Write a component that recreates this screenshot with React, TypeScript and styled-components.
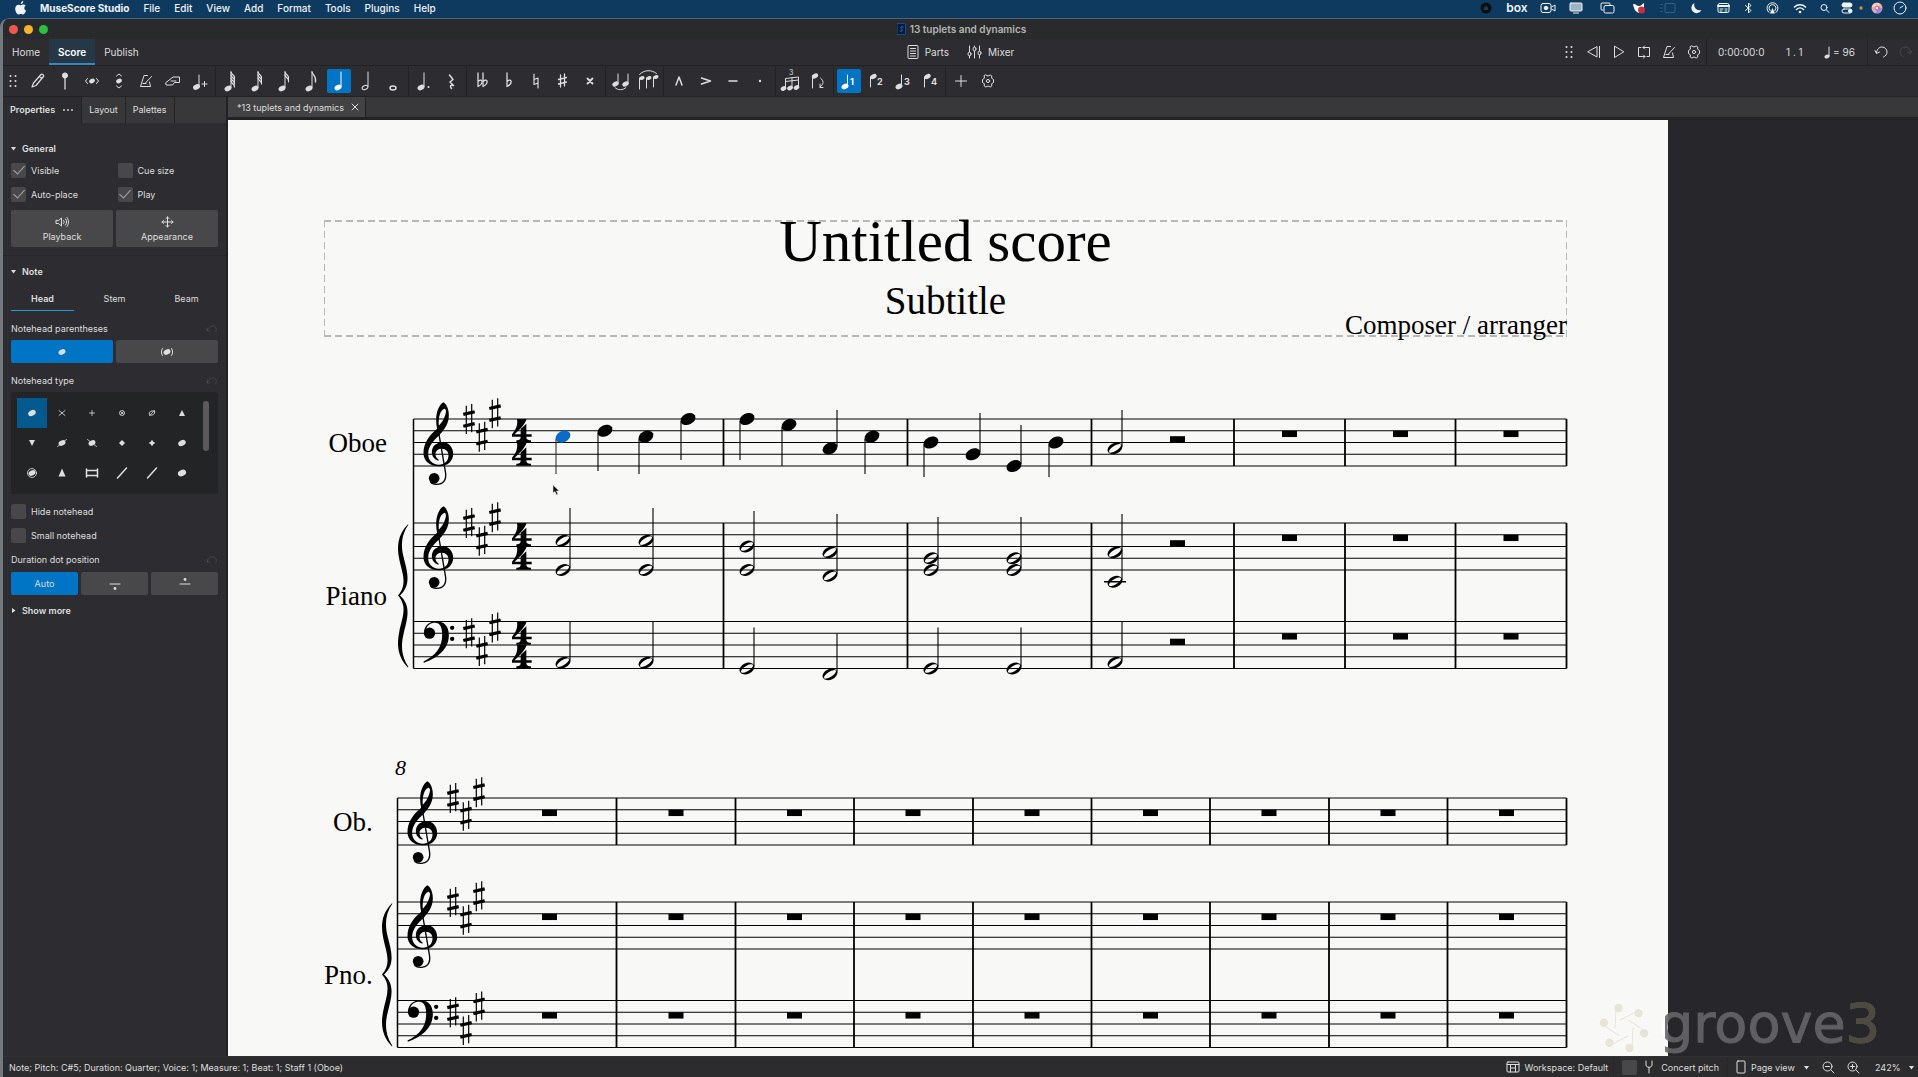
import React from "react";
import styled, { createGlobalStyle, css } from "styled-components";

const c = {
  menu: "#0e3a5f",
  title: "#292a2b",
  panel: "#2d2d31",
  tab: "#38383a",
  line: "#222225",
  button: "#48484a",
  well: "#232426",
  accent: "#0075c6",
  accentDeep: "#04598f",
  text: "#dededf",
  paper: "#f8f8f7",
  canvas: "#27262b",
};

const Global = createGlobalStyle`
  * { box-sizing: border-box; }
  html, body { margin: 0; height: 100%; }
  #root { height: 100%; }
  body { background: ${c.menu}; font-family: Inter, "Liberation Sans", sans-serif; color: ${c.text}; font-size: 9px; overflow: hidden; }
  button, input, select { font: inherit; color: inherit; border: 0; margin: 0; padding: 0; background: none; }
  svg { display: block; flex: none; }
`;

const Desktop = styled.div`
  display: flex;
  flex-direction: column;
  height: 100vh;
`;

/* ---------- system menu bar ---------- */
const MenuBar = styled.header`
  display: flex;
  align-items: center;
  height: 18px;
  flex: none;
  padding: 0 8px 2px 14px;
  font-size: 10px;
  color: #eef3f7;
`;
const Menus = styled.nav`
  display: flex;
  gap: 14px;
  margin-left: 12px;
  flex: 1;
`;
const MenuItem = styled.button<{ $strong?: boolean }>`
  line-height: 14px;
  font-weight: ${(p) => (p.$strong ? 700 : 500)};
`;
const Tray = styled.div`
  display: flex;
  align-items: center;
`;
const TraySlot = styled.span<{ $w: number }>`
  display: flex;
  justify-content: center;
  width: ${(p) => p.$w}px;
`;
const BoxWord = styled.span`
  font-weight: 600;
  font-size: 12px;
  line-height: 14px;
`;

/* ---------- application window ---------- */
const Window = styled.div`
  flex: 1;
  min-height: 0;
  display: flex;
  flex-direction: column;
  background: ${c.panel};
  border-left: 3px solid #73797e;
  border-top: 1px solid #4b6478;
  border-top-left-radius: 9px;
  overflow: hidden;
`;
const TitleBar = styled.div`
  display: grid;
  grid-template-columns: 1fr auto 1fr;
  align-items: center;
  height: 20px;
  flex: none;
  background: ${c.title};
  padding-left: 6px;
`;
const Lights = styled.div`
  display: flex;
  gap: 6px;
`;
const Light = styled.button<{ $color: string }>`
  width: 9px;
  height: 9px;
  border-radius: 50%;
  background: ${(p) => p.$color};
`;
const DocTitle = styled.div`
  display: flex;
  align-items: center;
  gap: 4px;
  padding-right: 4px;
  font-size: 10px;
  font-weight: 600;
  color: #b5b5b6;
`;

const NavRow = styled.div`
  display: grid;
  grid-template-columns: 1fr auto 1fr;
  align-items: stretch;
  height: 27px;
  flex: none;
  border-bottom: 1px solid ${c.line};
`;
const NavTabs = styled.nav`
  display: flex;
`;
const NavTab = styled.button<{ $on?: boolean }>`
  padding: 0 9px;
  font-size: 10px;
  font-weight: ${(p) => (p.$on ? 600 : 400)};
  ${(p) =>
    p.$on &&
    css`
      background: #263846;
      box-shadow: inset 0 -2px 0 #3688c0;
      color: #fff;
    `}
`;
const NavCenter = styled.div`
  display: flex;
  align-items: center;
  gap: 18px;
`;
const TextButton = styled.button`
  display: flex;
  align-items: center;
  gap: 6px;
  font-size: 10px;
`;
const Transport = styled.div`
  display: flex;
  align-items: center;
  justify-content: flex-end;
`;
const TransportButton = styled.button<{ $dim?: boolean }>`
  width: 25px;
  height: 24px;
  display: flex;
  align-items: center;
  justify-content: center;
  opacity: ${(p) => (p.$dim ? 0.15 : 1)};
`;
const Readout = styled.output<{ $w: number }>`
  display: flex;
  align-items: center;
  gap: 3px;
  width: ${(p) => p.$w}px;
  padding-left: 11px;
  font-size: 10px;
`;

const Tools = styled.div`
  display: flex;
  align-items: center;
  gap: 3px;
  height: 31px;
  flex: none;
  border-bottom: 1px solid ${c.line};
`;
const Tool = styled.button<{ $on?: boolean; $narrow?: boolean }>`
  display: flex;
  align-items: center;
  justify-content: center;
  width: ${(p) => (p.$narrow ? 20 : 24)}px;
  height: 24px;
  border-radius: 2px;
  background: ${(p) => (p.$on ? c.accent : "transparent")};
  color: ${(p) => (p.$on ? "#fff" : c.text)};
`;
const Rule = styled.span`
  width: 1px;
  align-self: stretch;
  background: ${c.line};
`;

const Work = styled.div`
  flex: 1;
  min-height: 0;
  display: grid;
  grid-template-columns: 225px 1fr;
`;

/* ---------- side panel ---------- */
const Side = styled.aside`
  border-right: 2px solid ${c.line};
  min-height: 0;
  overflow: hidden;
`;
const SideTabs = styled.div`
  display: flex;
  height: 26px;
  margin-bottom: 15px;
  background: ${c.tab};
`;
const SideTab = styled.button<{ $on?: boolean }>`
  display: flex;
  align-items: center;
  gap: 7px;
  padding: 0 7px 1px;
  border-right: 1px solid ${c.line};
  font-weight: ${(p) => (p.$on ? 600 : 400)};
  background: ${(p) => (p.$on ? c.panel : "transparent")};
`;
const Group = styled.section`
  padding: 0 8px;
`;
const GroupHead = styled.button`
  display: flex;
  align-items: center;
  gap: 6px;
  height: 20px;
  font-weight: 600;
`;
const Divider = styled.hr`
  border: 0;
  border-top: 1px solid #27272b;
  margin: 8px 0 5px;
`;
const Checks = styled.div<{ $cols?: number }>`
  display: grid;
  grid-template-columns: repeat(${(p) => p.$cols || 1}, 1fr);
  column-gap: 6px;
  margin-bottom: ${(p) => (p.$cols ? 4 : 0)}px;
`;
const Check = styled.label`
  display: flex;
  align-items: center;
  gap: 5px;
  height: 24px;
`;
const CheckInput = styled.input`
  appearance: none;
  width: 15px;
  height: 15px;
  border-radius: 2px;
  background: ${c.button};
  display: flex;
  justify-content: center;
  &:checked::after {
    content: "";
    width: 5px;
    height: 10px;
    border: solid #a8a8aa;
    border-width: 0 1px 1px 0;
    transform: rotate(42deg);
  }
`;
const Buttons = styled.div<{ $cols: number }>`
  display: grid;
  grid-template-columns: repeat(${(p) => p.$cols}, 1fr);
  gap: 3px;
`;
const PanelButton = styled.button<{ $on?: boolean; $tall?: boolean }>`
  display: flex;
  flex-direction: column;
  align-items: center;
  justify-content: center;
  gap: 3px;
  height: ${(p) => (p.$tall ? 37 : 23)}px;
  border-radius: 2px;
  background: ${(p) => (p.$on ? c.accent : c.button)};
`;
const InnerTabs = styled.div`
  display: grid;
  grid-template-columns: repeat(3, 1fr);
  gap: 9px;
  height: 30px;
`;
const InnerTab = styled.button<{ $on?: boolean }>`
  padding-top: 6px;
  font-weight: ${(p) => (p.$on ? 600 : 400)};
  border-bottom: 1px solid ${(p) => (p.$on ? "#2a94dc" : "transparent")};
`;
const FieldHead = styled.div<{ $tight?: boolean }>`
  display: flex;
  align-items: center;
  justify-content: space-between;
  height: ${(p) => (p.$tight ? 25 : 29)}px;
  padding-top: ${(p) => (p.$tight ? 0 : 6)}px;
`;
const Heads = styled.div`
  display: flex;
  justify-content: space-between;
  margin-bottom: 5px;
  padding: 6px 9px 5px 6px;
  height: 102px;
  background: ${c.well};
  border-radius: 2px;
`;
const HeadGrid = styled.div`
  display: grid;
  grid-template-columns: repeat(6, 30px);
  grid-auto-rows: 30px;
`;
const HeadCell = styled.button<{ $on?: boolean }>`
  display: flex;
  align-items: center;
  justify-content: center;
  background: ${(p) => (p.$on ? c.accentDeep : "transparent")};
`;
const Thumb = styled.span`
  width: 6px;
  height: 50px;
  margin-top: 3px;
  border-radius: 3px;
  background: #5b5b5d;
`;
const More = styled.div`
  margin-top: 5px;
`;

/* ---------- document area ---------- */
const Doc = styled.main`
  display: flex;
  flex-direction: column;
  min-width: 0;
  min-height: 0;
`;
const DocTabs = styled.div`
  display: flex;
  height: 20px;
  flex: none;
  background: ${c.tab};
`;
const DocTab = styled.button`
  display: flex;
  align-items: center;
  gap: 7px;
  padding: 0 6px 0 9px;
  background: #424244;
  border-right: 1px solid ${c.line};
`;
const Canvas = styled.div`
  position: relative;
  flex: 1;
  min-height: 0;
  border-top: 3px solid ${c.line};
  background: ${c.canvas};
  overflow: hidden;
`;
const Paper = styled.article`
  width: 1440px;
  padding: 100px 101px 80px 96px;
  background: ${c.paper};
  color: #000;
  font-family: "Liberation Serif", serif;
`;
const dash = "#b9b9b9 0 7px, transparent 7px 11px";
const Frame = styled.header`
  display: flex;
  flex-direction: column;
  align-items: center;
  height: 117px;
  background:
    repeating-linear-gradient(90deg, ${dash}) top / 100% 2px no-repeat,
    repeating-linear-gradient(90deg, ${dash}) bottom / 100% 2px no-repeat,
    repeating-linear-gradient(0deg, ${dash}) left / 1px 100% no-repeat,
    repeating-linear-gradient(0deg, ${dash}) right / 1px 100% no-repeat;
`;
const ScoreTitle = styled.h1`
  margin: 0;
  font-weight: 400;
  font-size: 59px;
  line-height: 42px;
`;
const Subtitle = styled.p`
  margin: 20px 0 0;
  font-size: 39px;
  line-height: 38px;
`;
const Composer = styled.p`
  margin: 0;
  align-self: flex-end;
  font-size: 27px;
  line-height: 10px;
`;
const SystemBox = styled.section<{ $labels: number }>`
  display: grid;
  grid-template-columns: ${(p) => p.$labels}px 1fr;
  column-gap: 5px;
`;
const FirstSystem = styled.div`
  margin-top: 82px;
`;
const Names = styled.div`
  display: grid;
  grid-template-rows: 47px 145px;
  row-gap: 57px;
  align-items: center;
  justify-items: end;
  font-size: 27px;
  line-height: 30px;
`;
const MeasureNumber = styled.div`
  margin: 87px 0 18px;
  padding-left: 71px;
  font-size: 22px;
  line-height: 24px;
  font-style: italic;
`;
const Notation = styled.svg`
  overflow: visible;
`;
const Pointer = styled.div`
  position: absolute;
  left: 324px;
  top: 364px;
`;
const Watermark = styled.div`
  position: absolute;
  right: 38px;
  bottom: 0;
  display: flex;
  align-items: center;
  gap: 10px;
  height: 56px;
  color: #6a696e;
  opacity: 0.9;
  font: 54px/50px "DejaVu Sans", sans-serif;
  -webkit-text-stroke: 1px currentColor;
`;
const WaterWord = styled.span`
  padding-bottom: 8px;
  background: linear-gradient(90deg, #fff 6px, #66656a 6px);
  background-clip: text;
  color: transparent;
`;
const WaterDigit = styled.span`
  color: #525043;
`;

/* ---------- status bar ---------- */
const Status = styled.footer`
  display: flex;
  align-items: center;
  height: 21px;
  flex: none;
  padding: 0 4px 0 6px;
  background: #2c2c2e;
  border-top: 1px solid #333335;
  white-space: nowrap;
`;
const StatusText = styled.span`
  flex: 1;
`;
const StatusItem = styled.div`
  display: flex;
  align-items: center;
  gap: 5px;
  height: 100%;
  padding: 0 8px;
  border-left: 1px solid #262628;
`;
const StatusButton = styled.button`
  display: flex;
  align-items: center;
  gap: 5px;
  padding: 0 5px;
`;
const ZoomButtons = styled.div`
  display: flex;
  gap: 2px;
  margin-right: 10px;
`;
const StatusLabel = styled.label`
  display: flex;
  align-items: center;
  gap: 8px;
`;
const Drop = styled.select<{ $w: number }>`
  appearance: none;
  width: ${(p) => p.$w}px;
`;

/* ---------- small drawings ---------- */
type IconProps = { w?: number; h?: number; children: React.ReactNode };
const Icon = ({ w = 24, h = 24, children }: IconProps) => (
  <svg
    width={w}
    height={h}
    viewBox={`0 0 ${w} ${h}`}
    fill="none"
    stroke="currentColor"
    strokeWidth={1}
    strokeLinecap="round"
    strokeLinejoin="round"
    aria-hidden="true"
  >
    {children}
  </svg>
);
const Solid = ({ d }: { d: string }) => <path d={d} fill="currentColor" stroke="none" />;
const Blob = ({ x, y, s = 1 }: { x: number; y: number; s?: number }) => (
  <ellipse cx={x} cy={y} rx={3.3 * s} ry={2.3 * s} transform={`rotate(-25 ${x} ${y})`} fill="currentColor" stroke="none" />
);
const Grip = () => (
  <Icon w={8} h={14}>
    {[2, 7, 12].map((y) => (
      <g key={y} fill="currentColor" stroke="none">
        <circle cx="1.5" cy={y} r="1" />
        <circle cx="6.5" cy={y} r="1" />
      </g>
    ))}
  </Icon>
);
const Metronome = () => (
  <Icon w={14} h={14}>
    <path d="M8.5 1.5H5L1.5 12.5h10L10.500 8M4 9.500h3M6 9.500 12.500 2.500" />
  </Icon>
);
const Gear = () => (
  <Icon w={14} h={14}>
    <path d="M4.800 1 7 2l2.200-1 1.600 1-.2 2.200 1.900 1.300v3l-1.900 1.300.2 2.200-1.600 1L7 12l-2.200 1-1.600-1 .2-2.200-1.900-1.300v-3l1.900-1.300L3.200 2z" />
    <circle cx="7" cy="7" r="1.600" />
  </Icon>
);
const Flagged = ({ flags }: { flags: number }) => (
  <Icon>
    <Blob x={9} y={19.500} s={1.100} />
    <path d="M12 18.500V3" />
    {Array.from({ length: flags }, (_, i) => (
      <path key={i} d={`M12 ${3 + i * 3}c.5 3 4.500 3.500 3.500 ${flags === 1 ? 10 : 6}`} strokeWidth={1.300} />
    ))}
    {flags > 1 && <path d={`M15.500 9V${11 + flags}`} />}
  </Icon>
);
const Reset = () => (
  <Icon w={12} h={10}>
    <g opacity="0.12">
      <path d="M1 4v3h3M1.500 6.500C2 3 5 1.500 7.500 2c3 .7 3.500 4 2 6" />
    </g>
  </Icon>
);
const Triangle = ({ right }: { right?: boolean }) => (
  <Icon w={5} h={5}>
    <Solid d={right ? "M1 0 4.500 2.500 1 5z" : "M0 1h5L2.500 4.500z"} />
  </Icon>
);
const Voice = ({ n }: { n: number }) => (
  <Icon>
    {n % 2 ? (
      <>
        <Blob x={8} y={17.500} s={1.100} />
        <path d="M10.500 16.500V6" />
      </>
    ) : (
      <>
        <Blob x={9.500} y={7.500} />
        <path d="M6.500 8v10" />
      </>
    )}
    <text x="13" y="15.500" fontSize="9" fontWeight="700" fill="currentColor" stroke="none">
      {n}
    </text>
  </Icon>
);
const sharp = "M9.500 6v12M13.500 5v12M7.500 10.500l8-2M7.500 15l8-2";
const flat = (x: number) => `M${x} 4v13.500c3-1.500 4.500-3.500 4-5.500-.6-1.500-2.500-1-4 .5`;

const tools: { name: string; on?: boolean; art: React.ReactNode }[][] = [
  [
    { name: "Note input", art: <Icon><path d="M6 18l1.500-4L15 5.500c1-1 3.500.8 2.500 2L10 16.500zM13.500 7.500l2.500 2" strokeWidth="1.200" /></Icon> },
    { name: "Input by duration", art: <Icon><circle cx="12" cy="6.500" r="2.600" fill="currentColor" /><path d="M12 8v12" strokeWidth="1.300" /></Icon> },
    { name: "Rhythm only", art: <Icon><Blob x={12} y={12} s={0.9} /><path d="M7.500 9.500 5.500 12l2 2.500M16.500 9.500l2 2.500-2 2.500" /></Icon> },
    { name: "Repitch", art: <Icon><Blob x={12} y={12} s={0.9} /><path d="M9.500 7 12 5l2.500 2M9.500 17l2.500 2 2.500-2" /></Icon> },
    { name: "Metronome input", art: <Metronome /> },
    { name: "Foot pedal", art: <Icon><path d="M5 13.500 12 8h6.500v5.500h-5l-2 2.500H5.500zM10 12h5" /></Icon> },
    { name: "Insert", art: <Icon><Blob x={8.500} y={18} s={1.100} /><path d="M11 17V6M14 15h5M16.500 12.500v5" /></Icon> },
  ],
  [
    { name: "64th note", art: <Flagged flags={4} /> },
    { name: "32nd note", art: <Flagged flags={3} /> },
    { name: "16th note", art: <Flagged flags={2} /> },
    { name: "Eighth note", art: <Flagged flags={1} /> },
    { name: "Quarter note", on: true, art: <Icon><Blob x={11} y={18.500} s={1.100} /><path d="M14 17.500V3" /></Icon> },
    { name: "Half note", art: <Icon><ellipse cx="11" cy="18.500" rx="3" ry="2" transform="rotate(-25 11 18.500)" /><path d="M14 17.500V3" /></Icon> },
    { name: "Whole note", art: <Icon><ellipse cx="12" cy="19" rx="3" ry="2" strokeWidth="1.400" /></Icon> },
  ],
  [
    { name: "Augmentation dot", art: <Icon><Blob x={9} y={18.500} s={1.100} /><path d="M12 17.500V4" /><circle cx="16.500" cy="18" r="1" fill="currentColor" stroke="none" /></Icon> },
    { name: "Rest", art: <Icon><path d="M10.500 6 14 10.500 11 13l3.500 3.500C11.500 15.500 10.500 17 12.500 19.500" strokeWidth="1.500" /></Icon> },
  ],
  [
    { name: "Double flat", art: <Icon><path d={flat(8)} strokeWidth="1.300" /><path d={flat(13)} strokeWidth="1.300" /></Icon> },
    { name: "Flat", art: <Icon><path d={flat(10)} strokeWidth="1.300" /></Icon> },
    { name: "Natural", art: <Icon><path d="M10 5v10.500l4-1.500M14 19V9l-4 1.500" strokeWidth="1.200" /></Icon> },
    { name: "Sharp", art: <Icon><path d={sharp} strokeWidth="1.300" /></Icon> },
    { name: "Double sharp", art: <Icon><path d="M9.500 9.500l5 5M14.500 9.500l-5 5" strokeWidth="1.800" /></Icon> },
  ],
  [
    { name: "Tie", art: <Icon><Blob x={6.500} y={15} /><Blob x={16.500} y={15} /><path d="M9 14.500V5M19 14.500V5M6 18.500c2.500 3 8 3 11 0" /></Icon> },
    { name: "Slur", art: <Icon><Blob x={6} y={9} s={0.8} /><Blob x={13} y={9} s={0.8} /><Blob x={20} y={8} s={0.8} /><path d="M3.500 9v11M10.500 9v10M17.500 8v10M3.500 5.500c5-5 12-5 17-1" /></Icon> },
  ],
  [
    { name: "Marcato", art: <Icon><path d="M9 16l3-8 3 8" strokeWidth="1.500" /></Icon> },
    { name: "Accent", art: <Icon><path d="M7.500 9l9 3-9 3" strokeWidth="1.500" /></Icon> },
    { name: "Tenuto", art: <Icon><path d="M8 12h8" strokeWidth="1.500" /></Icon> },
    { name: "Staccato", art: <Icon><circle cx="12" cy="12" r="1.200" fill="currentColor" stroke="none" /></Icon> },
  ],
  [
    { name: "Tuplet", art: <Icon><Blob x={4.500} y={19.500} s={0.9} /><Blob x={11} y={19} s={0.9} /><Blob x={17.500} y={18.500} s={0.9} /><path d="M6.500 19V9.500l13-1.500v10M13 18.500V9M6.500 12.500l13-1.500" /><text x="10" y="6" fontSize="7" fill="currentColor" stroke="none">3</text></Icon> },
    { name: "Flip direction", art: <Icon><Blob x={9} y={7} /><path d="M6.500 7v12M14.500 9c3.500 3 3.500 6-.5 9M14 15v3.500H17" /></Icon> },
  ],
  [
    { name: "Voice 1", on: true, art: <Voice n={1} /> },
    { name: "Voice 2", art: <Voice n={2} /> },
    { name: "Voice 3", art: <Voice n={3} /> },
    { name: "Voice 4", art: <Voice n={4} /> },
  ],
  [
    { name: "Add", art: <Icon><path d="M6.500 12h11M12 6.500v11" /></Icon> },
    { name: "Customize toolbar", art: <Gear /> },
  ],
];

const tray: { w: number; art: React.ReactNode }[] = [
  { w: 31, art: <Icon w={12} h={12}><circle cx="6" cy="6" r="5.500" fill="#0b1017" stroke="none" /><path d="M3.500 8h5L8 7c0-4-4-4-4 0z" fill="#26384a" stroke="none" /></Icon> },
  { w: 32, art: <BoxWord>box</BoxWord> },
  { w: 30, art: <Icon w={16} h={12}><rect x="1" y="1.500" width="10" height="9" rx="2" /><circle cx="6" cy="6" r="1.800" fill="currentColor" /><path d="M11.500 5 15 3v6l-3.500-2" /></Icon> },
  { w: 26, art: <Icon w={14} h={12}><rect x="1" y="1" width="12" height="8" rx="1" fill="#9fb2c3" /><path d="M4.500 11h5" /></Icon> },
  { w: 36, art: <Icon w={15} h={12}><path d="M3 8H2a1 1 0 0 1-1-1V2a1 1 0 0 1 1-1h7a1 1 0 0 1 1 1v1" /><rect x="4" y="3.500" width="10" height="7.500" rx="1.500" /></Icon> },
  { w: 28, art: <Icon w={15} h={12}><path d="M1 2c3 0 4 2 6 2s3-2 5-3v6l-5 4C4 10 2 8 1 2z" fill="#fff" stroke="none" /><circle cx="9.500" cy="8" r="3.500" fill="#c9303f" stroke="none" /></Icon> },
  { w: 30, art: <Icon w={16} h={12}><g opacity=".2"><rect x="5" y="1.500" width="10" height="9" rx="1" /><path d="M1 2.500h1M1 6h1M1 9.500h1" /></g></Icon> },
  { w: 26, art: <Icon w={12} h={12}><path d="M4.500 1a5.300 5.300 0 1 0 7 7A5.500 5.500 0 0 1 4.500 1z" fill="currentColor" stroke="none" /></Icon> },
  { w: 28, art: <Icon w={13} h={12}><rect x="1" y="1.500" width="11" height="9" rx="1.500" /><path d="M1 4h11" strokeWidth="2" /><path d="M3 7h3M8 7h2M3 9h2M8 9h2" /></Icon> },
  { w: 22, art: <Icon w={9} h={12}><path d="M1.500 3.500 7 8.500 4.500 11V1L7 3.500l-5.500 5" /></Icon> },
  { w: 26, art: <Icon w={13} h={12}><path d="M3 10.500a5.500 5.500 0 1 1 7 0M4.500 9a3.500 3.500 0 1 1 4 0" /><path d="M6.500 6 9 11.500H4z" fill="currentColor" stroke="none" /></Icon> },
  { w: 30, art: <Icon w={14} h={11}><path d="M1.500 4c3-3 8-3 11 0M3.500 6.500c2-2 5-2 7 0" strokeWidth="1.500" /><circle cx="7" cy="9" r="1.300" fill="currentColor" stroke="none" /></Icon> },
  { w: 20, art: <Icon w={10} h={11}><circle cx="4" cy="4.500" r="3" /><path d="M6.500 7 9 9.500" /></Icon> },
  { w: 24, art: <Icon w={12} h={12}><rect x="1" y="1" width="10" height="4" rx="2" fill="currentColor" /><rect x="1" y="7" width="10" height="4" rx="2" /><circle cx="9" cy="9" r="1.500" fill="currentColor" /></Icon> },
  { w: 4, art: <Icon w={4} h={4}><circle cx="2" cy="2" r="1.700" fill="#d98b31" stroke="none" /></Icon> },
  { w: 27, art: <Icon w={12} h={12}><circle cx="6" cy="6" r="5.500" fill="#e9a7ba" stroke="none" /><path d="M1 5a5 5 0 0 1 8-3L6 6z" fill="#f2d4b0" stroke="none" /><path d="M11 6a5 5 0 0 1-6 5l1-5z" fill="#9a8ce0" stroke="none" /><circle cx="6" cy="6" r="2" fill="#fff" stroke="#d24f6c" /></Icon> },
  { w: 20, art: <Icon w={14} h={14}><circle cx="7" cy="7" r="6" /><path d="M7 7l3-2" /></Icon> },
];

const headShapes: { name: string; art: React.ReactNode }[] = [
  { name: "Normal", art: <Blob x={7} y={7} s={1.200} /> },
  { name: "Cross", art: <path d="M4 4.500l6 5M10 4.500l-6 5" strokeWidth=".8" /> },
  { name: "Plus", art: <path d="M4.500 7h5M7 4.500v5" strokeWidth=".8" /> },
  { name: "XCircle", art: <><circle cx="7" cy="7" r="2.500" strokeWidth=".8" /><path d="M5.500 5.500l3 3M8.500 5.500l-3 3" strokeWidth=".8" /></> },
  { name: "Slashed", art: <><ellipse cx="7" cy="7" rx="3" ry="2" strokeWidth=".8" transform="rotate(-25 7 7)" /><path d="M4.500 9.500l5-5" strokeWidth=".8" /></> },
  { name: "Triangle up", art: <Solid d="M7 4l3 6H4z" /> },
  { name: "Triangle down", art: <Solid d="M7 10l3-6H4z" /> },
  { name: "Slashed 1", art: <><Blob x={7} y={7} s={1.100} /><path d="M2.500 10.500l9-7" strokeWidth=".8" /></> },
  { name: "Slashed 2", art: <><Blob x={7} y={7} s={1.100} /><path d="M2.500 3.500l9 7" strokeWidth=".8" /></> },
  { name: "Diamond", art: <Solid d="M7 4l3 3-3 3-3-3z" /> },
  { name: "Diamond old", art: <Solid d="M7 3.700l1.300 2 2 1.300-2 1.300-1.300 2-1.300-2-2-1.300 2-1.300z" /> },
  { name: "Heavy", art: <Blob x={7} y={7} s={1.200} /> },
  { name: "Circled", art: <><circle cx="7" cy="7" r="4.500" strokeWidth=".8" /><Blob x={7} y={7} s={1.100} /></> },
  { name: "Tall triangle", art: <Solid d="M7 2.500l3.500 8h-7z" /> },
  { name: "Breve", art: <path d="M1.500 3v8M12.500 3v8M1.500 4.500h11M1.500 9.500h11" strokeWidth="1.500" /> },
  { name: "Slash", art: <path d="M2.500 12l9-10" strokeWidth="1.500" /> },
  { name: "Slash large", art: <path d="M2.500 12l9-10" strokeWidth="1.500" /> },
  { name: "Large", art: <Blob x={7} y={7} s={1.300} /> },
];

/* ---------- engraving ---------- */
const SP = 11.75;
const STAVES = [0, 104, 202.5];

const TrebleClef = ({ x, y }: { x: number; y: number }) => (
  <g transform={`translate(${x} ${y}) scale(.3333)`}>
    <path
      fillRule="evenodd"
      d="M60-50C47-43 38-22 38 4c0 9 1 17 3 25C18 49 0 70 0 102c0 25 20 40 47 40 26 0 42-17 42-37 0-21-14-35-32-35-19 0-32 13-32 30 0 12 8 22 19 25l2-3c-7-4-10-10-10-16 0-11 8-17 19-17 13 0 20 9 20 20 0 17-11 28-29 28-20 0-32-14-32-32 0-22 14-38 34-57C64 30 76 14 76-11c0-18-6-33-16-39zM63-31c6 2 5 11 2 20C61 2 55 11 46 20 44-5 50-27 63-31z"
    />
    <path d="M42 20 66 160c4 24-8 36-27 36-9 0-16-4-19-9" fill="none" stroke="#000" strokeWidth="4" />
    <circle cx="32" cy="178" r="16" />
  </g>
);
const BassClef = ({ x, y }: { x: number; y: number }) => (
  <g transform={`translate(${x} ${y}) scale(.3333)`}>
    <path d="M2 32C2 12 18-1 39-1c23 0 37 15 37 42C76 82 44 108 1 124l-1-4c35-17 56-40 56-80C56 16 49 4 35 4 21 4 9 12 8 26z" />
    <circle cx="18" cy="35" r="17" />
    <circle cx="86" cy="19" r="6.500" />
    <circle cx="86" cy="52" r="6.500" />
  </g>
);
const Sharp = ({ x, y }: { x: number; y: number }) => (
  <g transform={`translate(${x} ${y})`} stroke="#000" fill="none">
    <path d="M-2.700-13.300V15M2.700-15V13.300" strokeWidth="1.200" />
    <path d="M-5.700-4.600 5.700-7.200M-5.700 7.200 5.700 4.600" strokeWidth="3.200" />
  </g>
);
const four =
  "M15 0h29C38 18 22 32 8 46h18V30L43 14v32h16v7H43c0 7 3 10 14 11v6H13v-6c11-1 13-4 13-11H0v-7C12 32 18 18 15 0z";
const Time = ({ x, y }: { x: number; y: number }) => (
  <g>
    <path d={four} transform={`translate(${x} ${y}) scale(.3333)`} />
    <path d={four} transform={`translate(${x} ${y + 23.5}) scale(.3333)`} />
  </g>
);
const Brace = ({ x, y }: { x: number; y: number }) => (
  <path
    transform={`translate(${x} ${y}) scale(.3333)`}
    d="M30 2C-2 34-4 70 4 108c8 40 26 75-4 108 30 33 12 68 4 108-8 38-6 76 26 108l1-2C10 398 8 366 17 330c11-44 24-82-11-114 35-32 22-70 11-114C8 66 10 34 31 4z"
  />
);

type Chord = { x: number; at: number[]; end: number; open?: boolean; down?: boolean; color?: string };
const Notes = ({ list, top }: { list: Chord[]; top: number }) => (
  <g>
    {list.map((n) => {
      const ys = n.at.map((p) => top + (p * SP) / 2);
      const sx = n.down ? n.x - 7 : n.x + 7;
      const from = n.down ? Math.min(...ys) + 2 : Math.max(...ys) - 2;
      return (
        <g key={n.x}>
          {n.at.includes(10) && <path d={`M${n.x - 11} ${top + 5 * SP}h22`} stroke="#000" strokeWidth="1.500" />}
          <path d={`M${sx} ${from}V${top + n.end}`} stroke={n.color ? "#333" : "#000"} strokeWidth="1.100" />
          {ys.map((y) =>
            n.open ? (
              <g key={y} transform={`translate(${n.x} ${y}) rotate(-24)`}>
                <path
                  fillRule="evenodd"
                  d="M-7.800 0a7.800 5.400 0 1 0 15.600 0a7.800 5.400 0 1 0-15.600 0zM-6.900.8a6.900 2.500 -8 1 0 13.800-1.600a6.900 2.500 -8 1 0-13.800 1.600z"
                />
              </g>
            ) : (
              <ellipse key={y} rx="7.800" ry="5.600" transform={`translate(${n.x} ${y}) rotate(-26)`} fill={n.color || "#000"} />
            )
          )}
        </g>
      );
    })}
  </g>
);

type SystemProps = {
  left: number;
  start: number;
  bars: number[];
  rests: number[];
  halfRest?: number;
  meter?: boolean;
  parts?: Chord[][];
};
const Staves = ({ left, start, bars, rests, halfRest, meter, parts }: SystemProps) => {
  const end = bars[bars.length - 1];
  return (
    <Notation width={end + 1 - left} height={250} viewBox={`${left} 0 ${end + 1 - left} 250`} role="img" aria-label="Music notation">
      {STAVES.map((top, i) => (
        <g key={top}>
          {[0, 1, 2, 3, 4].map((l) => (
            <path key={l} d={`M${start} ${top + l * SP}H${end}`} stroke="#000" strokeWidth="1.200" />
          ))}
          {i < 2 ? <TrebleClef x={start + 10} y={top} /> : <BassClef x={start + 10} y={top} />}
          <Sharp x={start + 55.5} y={top + (i < 2 ? 0 : SP)} />
          <Sharp x={start + 68.5} y={top + SP * (i < 2 ? 1.5 : 2.5)} />
          <Sharp x={start + 81.5} y={top + SP * (i < 2 ? -0.5 : 0.5)} />
          {meter && <Time x={start + 98.5} y={top} />}
          {rests.map((x) => (
            <rect key={x} x={x - 7.5} y={top + SP} width="15" height="6.300" />
          ))}
          {halfRest && <rect x={halfRest - 7.5} y={top + SP * 2 - 6.3} width="15" height="6.300" />}
          {parts && <Notes list={parts[i]} top={top} />}
        </g>
      ))}
      {bars.map((x) => (
        <path key={x} d={`M${x} 0V47M${x} 104V249.500`} stroke="#000" strokeWidth="1.800" />
      ))}
      <path d={`M${start} 0V249.500`} stroke="#000" strokeWidth="1.500" />
      <Brace x={start - 15.5} y={104.5} />
    </Notation>
  );
};

const d = (x: number, p: number, end: number, color?: string): Chord => ({ x, at: [p], end, down: true, color });
const u = (x: number, p: number, end: number): Chord => ({ x, at: [p], end });
const h = (x: number, at: number[], end: number): Chord => ({ x, at, end, open: true });

const firstParts: Chord[][] = [
  [
    d(563, 3, 55, "#0a6cc8"), d(605, 2, 52), d(646, 3, 55), d(688, 0, 41),
    d(747, 0, 41), d(789, 1, 47), u(830, 5, -9), d(872, 3, 55),
    d(931, 4, 58), u(973, 6, -6), u(1014, 8, 6), d(1056, 4, 58), h(1115, [5], -9),
  ],
  [
    h(563, [3, 8], -15), h(646, [3, 8], -15), h(747, [4, 8], -12), h(830, [5, 9], -9),
    h(931, [6, 8], -6), h(1014, [6, 8], -6), h(1115, [5, 10], -9),
  ],
  [
    h(563, [7], 0), h(646, [7], 0), h(747, [8], 6), h(830, [9], 12),
    h(931, [8], 6), h(1014, [8], 6), h(1115, [7], 0),
  ],
];
const secondBars = [616.5, 735.5, 854, 973, 1091.5, 1210, 1329, 1447.5, 1566.5];
const secondRests = [549.5, 676, 794.5, 913, 1032, 1150.5, 1269, 1388, 1506.5];

const CheckField = ({ id, label, on }: { id: string; label: string; on?: boolean }) => (
  <Check htmlFor={id}>
    <CheckInput id={id} type="checkbox" defaultChecked={on} />
    {label}
  </Check>
);

export default function App() {
  return (
    <Desktop>
      <Global />
      <MenuBar>
        <Icon w={14} h={14}>
          <Solid d="M9.300 0c.1 1.500-1 3-2.500 3C6.600 1.600 7.900.2 9.300 0zM11.600 4.700c-2 1.300-1.500 4 .5 4.800-.7 1.900-1.800 3.900-3.100 3.900-.9 0-1.200-.5-2.200-.5s-1.400.5-2.200.5C3 13.400 1.200 10.500 1.200 7.700c0-2.600 1.700-4 3.300-4 1 0 1.800.6 2.500.6.6 0 1.500-.7 2.700-.7.800 0 1.500.4 1.900 1.100z" />
        </Icon>
        <Menus>
          <MenuItem $strong>MuseScore Studio</MenuItem>
          {["File", "Edit", "View", "Add", "Format", "Tools", "Plugins", "Help"].map((m) => (
            <MenuItem key={m}>{m}</MenuItem>
          ))}
        </Menus>
        <Tray>
          {tray.map((t, i) => (
            <TraySlot key={i} $w={t.w}>{t.art}</TraySlot>
          ))}
        </Tray>
      </MenuBar>

      <Window>
        <TitleBar>
          <Lights>
            <Light $color="#f0564f" aria-label="Close" />
            <Light $color="#f5b32f" aria-label="Minimize" />
            <Light $color="#2fbf40" aria-label="Zoom" />
          </Lights>
          <DocTitle>
            <Icon w={9} h={12}>
              <rect x=".5" y=".5" width="8" height="11" fill="#08183c" stroke="#174a8c" />
              <path d="M6 4C4 3 3 4.500 4.500 5.800S5 9 3 8" stroke="#2f7fd0" />
            </Icon>
            13 tuplets and dynamics
          </DocTitle>
        </TitleBar>

        <NavRow>
          <NavTabs>
            <NavTab>Home</NavTab>
            <NavTab $on>Score</NavTab>
            <NavTab>Publish</NavTab>
          </NavTabs>
          <NavCenter>
            <TextButton>
              <Icon w={12} h={14}>
                <rect x="1" y=".5" width="10" height="13" rx="1" />
                <path d="M3.500 3.500h5M3.500 6h5M3.500 8.500h5M3.500 11h5" />
              </Icon>
              Parts
            </TextButton>
            <TextButton>
              <Icon w={15} h={14}>
                <path d="M2.500 1v6M2.500 11v2M7.500 1v1M7.500 6v7M12.500 1v5M12.500 10v3" />
                <ellipse cx="2.500" cy="9" rx="1.500" ry="2" />
                <ellipse cx="7.500" cy="4" rx="1.500" ry="2" />
                <ellipse cx="12.500" cy="8" rx="1.500" ry="2" />
              </Icon>
              Mixer
            </TextButton>
          </NavCenter>
          <Transport>
            <TransportButton aria-label="Move toolbar"><Grip /></TransportButton>
            <TransportButton aria-label="Rewind"><Icon w={14} h={14}><path d="M10 2v10L1 7zM12.500 1.500v11" /></Icon></TransportButton>
            <TransportButton aria-label="Play"><Icon w={14} h={14}><path d="M2.500 1.500v11l9-5.500z" /></Icon></TransportButton>
            <TransportButton aria-label="Loop"><Icon w={14} h={14}><path d="M4 2.500H1.500v9H8M10 11.500h2.500v-9H6M7.500 1 6 2.500 7.500 4M6.500 10 8 11.500 6.500 13" /></Icon></TransportButton>
            <TransportButton aria-label="Metronome"><Metronome /></TransportButton>
            <TransportButton aria-label="Playback settings"><Gear /></TransportButton>
            <Rule />
            <Readout $w={68}>0:00:00:0</Readout>
            <Readout $w={38}>1 . 1</Readout>
            <Readout $w={54}>
              <Icon w={6} h={14}><Blob x={3} y={11.500} s={0.8} /><path d="M5 11V2" /></Icon>
              = 96
            </Readout>
            <Rule />
            <TransportButton aria-label="Undo"><Icon w={14} h={14}><path d="M1 5.500 2.500 8.500 5.500 7M2.500 8C2.500 4.500 5 2 8 2s5 2.500 5 5-1.500 4-3.500 5" /></Icon></TransportButton>
            <TransportButton $dim aria-label="Redo"><Icon w={14} h={14}><path d="M13 5.500 11.500 8.500 8.500 7M11.500 8C11.500 4.500 9 2 6 2S1 4.500 1 7s1.500 4 3.500 5" /></Icon></TransportButton>
          </Transport>
        </NavRow>

        <Tools>
          <Tool $narrow aria-label="Move toolbar"><Grip /></Tool>
          {tools.map((group, i) => (
            <React.Fragment key={i}>
              {i > 0 && <Rule />}
              {group.map((t) => (
                <Tool key={t.name} $on={t.on} aria-label={t.name}>{t.art}</Tool>
              ))}
            </React.Fragment>
          ))}
        </Tools>

        <Work>
          <Side>
            <SideTabs>
              <SideTab $on>
                Properties
                <Icon w={12} h={4}>
                  {[2, 6, 10].map((x) => <circle key={x} cx={x} cy="2" r=".9" fill="currentColor" stroke="none" />)}
                </Icon>
              </SideTab>
              <SideTab>Layout</SideTab>
              <SideTab>Palettes</SideTab>
            </SideTabs>

            <Group>
              <GroupHead><Triangle /> General</GroupHead>
              <Checks $cols={2}>
                <CheckField id="visible" label="Visible" on />
                <CheckField id="cue" label="Cue size" />
                <CheckField id="auto" label="Auto-place" on />
                <CheckField id="play" label="Play" on />
              </Checks>
              <Buttons $cols={2}>
                <PanelButton $tall>
                  <Icon w={14} h={12}><path d="M1 4.500v3h2.500L6.500 10V2L3.500 4.500zM8.500 4.500c1 1 1 2 0 3M10.500 3c1.500 2 1.500 4 0 6M12 1.500c2 3 2 6 0 9" /></Icon>
                  Playback
                </PanelButton>
                <PanelButton $tall>
                  <Icon w={13} h={12}><path d="M6.500 1v10M1 6h11M5 2.500 6.500 1 8 2.500M5 9.500 6.500 11 8 9.500M2.500 4.500 1 6l1.500 1.500M10.500 4.500 12 6l-1.500 1.500" /></Icon>
                  Appearance
                </PanelButton>
              </Buttons>
            </Group>
            <Divider />
            <Group>
              <GroupHead><Triangle /> Note</GroupHead>
              <InnerTabs>
                <InnerTab $on>Head</InnerTab>
                <InnerTab>Stem</InnerTab>
                <InnerTab>Beam</InnerTab>
              </InnerTabs>
              <FieldHead>Notehead parentheses<Reset /></FieldHead>
              <Buttons $cols={2}>
                <PanelButton $on aria-label="Without parentheses"><Icon w={14} h={14}><Blob x={7} y={7} s={1.100} /></Icon></PanelButton>
                <PanelButton aria-label="With parentheses"><Icon w={14} h={14}><Blob x={7} y={7} s={1.100} /><path d="M2.500 3.500c-1.500 2-1.500 5 0 7M11.500 3.500c1.500 2 1.500 5 0 7" /></Icon></PanelButton>
              </Buttons>
              <FieldHead>Notehead type<Reset /></FieldHead>
              <Heads>
                <HeadGrid>
                  {headShapes.map((s, i) => (
                    <HeadCell key={s.name} $on={i === 0} aria-label={s.name}>
                      <Icon w={14} h={14}>{s.art}</Icon>
                    </HeadCell>
                  ))}
                </HeadGrid>
                <Thumb />
              </Heads>
              <Checks>
                <CheckField id="hide" label="Hide notehead" />
                <CheckField id="small" label="Small notehead" />
              </Checks>
              <FieldHead $tight>Duration dot position<Reset /></FieldHead>
              <Buttons $cols={3}>
                <PanelButton $on>Auto</PanelButton>
                <PanelButton aria-label="Below line"><Icon w={12} h={12}><path d="M1 6h10" /><circle cx="6" cy="10.500" r="1.400" fill="currentColor" stroke="none" /></Icon></PanelButton>
                <PanelButton aria-label="Above line"><Icon w={12} h={12}><path d="M1 6h10" /><circle cx="6" cy="1.500" r="1.400" fill="currentColor" stroke="none" /></Icon></PanelButton>
              </Buttons>
              <More>
                <GroupHead><Triangle right /> Show more</GroupHead>
              </More>
            </Group>
          </Side>

          <Doc>
            <DocTabs>
              <DocTab>
                *13 tuplets and dynamics
                <Icon w={8} h={8}><path d="M1 1l6 6M7 1 1 7" /></Icon>
              </DocTab>
            </DocTabs>
            <Canvas>
              <Paper>
                <Frame>
                  <ScoreTitle>Untitled score</ScoreTitle>
                  <Subtitle>Subtitle</Subtitle>
                  <Composer>Composer / arranger</Composer>
                </Frame>
                <FirstSystem>
                  <SystemBox $labels={63}>
                    <Names><span>Oboe</span><span>Piano</span></Names>
                    <Staves
                      left={392}
                      start={413.5}
                      bars={[723.5, 907.5, 1091.5, 1234, 1345, 1455.5, 1566.5]}
                      rests={[1289.5, 1400.5, 1511]}
                      halfRest={1177.5}
                      meter
                      parts={firstParts}
                    />
                  </SystemBox>
                </FirstSystem>
                <MeasureNumber>8</MeasureNumber>
                <SystemBox $labels={48}>
                  <Names><span>Ob.</span><span>Pno.</span></Names>
                  <Staves left={377} start={397.5} bars={secondBars} rests={secondRests} />
                </SystemBox>
              </Paper>
              <Pointer>
                <Icon w={9} h={12}><path d="M1 1v8l2-1.500L4.500 11 6 10.300 4.500 7H7z" fill="#111" stroke="#ddd" strokeWidth=".6" /></Icon>
              </Pointer>
              <Watermark>
                <svg width="50" height="52" viewBox="-25 -26 50 52" aria-hidden="true">
                  {[0, 60, 120, 180, 240, 300].map((a) => (
                    <g key={a} transform={`rotate(${a})`} fill="#e6e3d3" stroke="#e6e3d3">
                      <circle cx="-5.500" cy="-20" r="4.200" stroke="none" />
                      <path d="M-8-18-9 0" strokeWidth="1" />
                    </g>
                  ))}
                </svg>
                <WaterWord>groove<WaterDigit>3</WaterDigit></WaterWord>
              </Watermark>
            </Canvas>
          </Doc>
        </Work>

        <Status>
          <StatusText>Note; Pitch: C#5; Duration: Quarter; Voice: 1; Measure: 1; Beat: 1; Staff 1 (Oboe)</StatusText>
          <StatusButton>
            <Icon w={14} h={12}><rect x="1" y="1" width="12" height="10" rx="1" /><path d="M1 3.500h12M4.500 3.500V11M9.500 3.500V11M4.500 7h5" /></Icon>
            Workspace: Default
          </StatusButton>
          <StatusItem>
            <StatusLabel htmlFor="concert">
              <CheckInput id="concert" type="checkbox" />
              <Icon w={8} h={14}><path d="M1 1v4c0 3 6 3 6 0V1M4 7.500V13" /></Icon>
              Concert pitch
            </StatusLabel>
          </StatusItem>
          <StatusItem>
            <Icon w={10} h={14}><rect x="1" y="1" width="8" height="12" rx="1" /></Icon>
            <Drop $w={48} aria-label="View mode" defaultValue="Page view">
              <option>Page view</option>
            </Drop>
            <Triangle />
          </StatusItem>
          <ZoomButtons>
            <StatusButton aria-label="Zoom out">
              <Icon w={13} h={13}><circle cx="5.500" cy="5.500" r="4.500" /><path d="M9 9l3 3M3.500 5.500h4" /></Icon>
            </StatusButton>
            <StatusButton aria-label="Zoom in">
              <Icon w={13} h={13}><circle cx="5.500" cy="5.500" r="4.500" /><path d="M9 9l3 3M3.500 5.500h4M5.500 3.500v4" /></Icon>
            </StatusButton>
          </ZoomButtons>
          <Drop $w={34} aria-label="Zoom level" defaultValue="242%">
            <option>242%</option>
          </Drop>
          <Triangle />
        </Status>
      </Window>
    </Desktop>
  );
}
